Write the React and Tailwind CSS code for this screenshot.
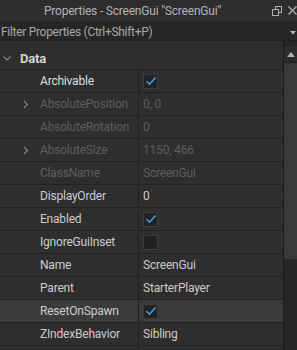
import React from "react";

const F = { fontFamily: 'Roboto, "Open Sans", sans-serif' };

function Check({ on }) {
  return (
    <div className="w-[15px] h-[15px] bg-[#222222] border border-[#3c3c3c] flex items-center justify-center">
      {on && (
        <svg width="12" height="12" viewBox="0 0 12 12">
          <path d="M1.5 6.2 L4.5 9.2 L10.5 2.5" fill="none" stroke="#35a6f0" strokeWidth="1.6" />
        </svg>
      )}
    </div>
  );
}

const rows = [
  { n: "Archivable", v: { check: true }, bright: true },
  { n: "AbsolutePosition", v: "0, 0", dis: true, exp: true },
  { n: "AbsoluteRotation", v: "0", dis: true },
  { n: "AbsoluteSize", v: "1150, 466", dis: true, exp: true },
  { n: "ClassName", v: "ScreenGui", dis: true },
  { n: "DisplayOrder", v: "0" },
  { n: "Enabled", v: { check: true } },
  { n: "IgnoreGuiInset", v: { check: false } },
  { n: "Name", v: "ScreenGui" },
  { n: "Parent", v: "StarterPlayer" },
  { n: "ResetOnSpawn", v: { check: true }, hl: true },
  { n: "ZIndexBehavior", v: "Sibling" },
  { n: "", v: "" },
];

export default function App() {
  return (
    <div className="w-[297px] h-[350px] overflow-hidden bg-[#2e2e2e] text-[12px] tracking-[-0.2px] leading-none flex flex-col" style={F}>
      <div className="h-[22px] shrink-0 bg-[#2d2d2d] flex items-center relative">
        <div className="flex-1 flex justify-center pr-[32px] text-[#b4b4b4] text-[12px]">
          Properties - ScreenGui "ScreenGui"
        </div>
        <svg className="absolute left-[272px] top-[6px]" width="10" height="10" viewBox="0 0 10 10">
          <rect x="3.5" y="0.5" width="6" height="6" fill="none" stroke="#b0b0b0" />
          <rect x="0.5" y="3.5" width="6" height="6" fill="#2d2d2d" stroke="#b0b0b0" />
        </svg>
        <svg className="absolute left-[288px] top-[6px]" width="9" height="9" viewBox="0 0 9 9">
          <path d="M0.5 0.5 L8.5 8.5 M8.5 0.5 L0.5 8.5" stroke="#b0b0b0" strokeWidth="1.2" />
        </svg>
      </div>
      <div className="h-[19px] shrink-0 bg-[#262626] border-y border-[#1f1f1f] flex items-center relative">
        <span className="text-[#a8a8a8] text-[12px] tracking-[-0.3px] pl-[1px]">Filter Properties (Ctrl+Shift+P)</span>
        <svg className="absolute left-[290px] top-[8px]" width="6" height="4" viewBox="0 0 6 4">
          <path d="M0 0 L6 0 L3 3.5 Z" fill="#b8b8b8" />
        </svg>
      </div>
      <div className="flex-1 flex min-h-0">
        <div className="w-[283px] flex flex-col">
          <div className="h-[29px] shrink-0 flex items-center pt-[6px] border-b border-[#222222]">
            <svg className="ml-[3px]" width="8" height="5" viewBox="0 0 8 5">
              <path d="M0.5 0.5 L4 4 L7.5 0.5" fill="none" stroke="#8a8a8a" strokeWidth="1.1" />
            </svg>
            <span className="ml-[9px] font-bold text-[#d4d4d4] text-[13px]">Data</span>
          </div>
          {rows.map((r, i) => (
            <div
              key={i}
              className={`h-[23px] shrink-0 flex border-b border-[#222222] ${r.hl ? "bg-[#3b3b3b]" : ""}`}
            >
              <div className="w-[139px] shrink-0 border-r border-[#222222] flex items-center relative">
                {r.exp && (
                  <svg className="absolute left-[23px] top-[7px]" width="6" height="9" viewBox="0 0 6 9">
                    <path d="M0.8 0.8 L4.5 4.5 L0.8 8.2" fill="none" stroke="#8a8a8a" strokeWidth="1.2" />
                  </svg>
                )}
                <span
                  className={`pl-[40px] ${r.dis ? "text-[#5e5e5e]" : r.bright ? "text-[#dedede]" : "text-[#cccccc]"}`}
                >
                  {r.n}
                </span>
              </div>
              <div className="flex-1 flex items-center pl-[4px]">
                {typeof r.v === "object" ? (
                  <Check on={r.v.check} />
                ) : (
                  <span className={r.dis ? "text-[#5e5e5e]" : "text-[#cccccc]"}>{r.v}</span>
                )}
              </div>
            </div>
          ))}
        </div>
        <div className="w-[14px] flex flex-col bg-[#262626] border-l border-[#1c1c1c] pt-[5px]">
          <div className="h-[17px] shrink-0 bg-[#2b2b2b] flex items-center justify-center border-b border-[#1c1c1c]">
            <svg width="8" height="5" viewBox="0 0 8 5">
              <path d="M0 5 L8 5 L4 0 Z" fill="#b0b0b0" />
            </svg>
          </div>
          <div className="h-[196px] shrink-0 bg-[#3a3a3a]" />
          <div className="flex-1 bg-[#262626]" />
        </div>
      </div>
    </div>
  );
}
